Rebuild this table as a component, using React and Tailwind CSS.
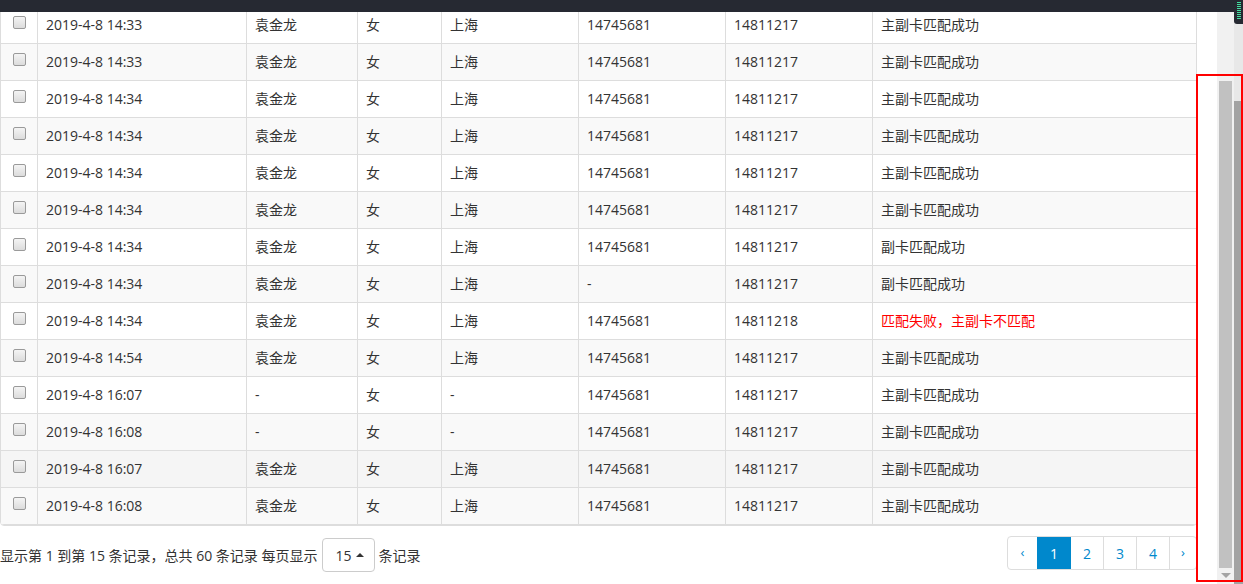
import React from "react";

const OK = "主副卡匹配成功";
const rows = [
  ["2019-4-8 14:33", "袁金龙", "女", "上海", "14745681", "14811217", OK],
  ["2019-4-8 14:33", "袁金龙", "女", "上海", "14745681", "14811217", OK],
  ["2019-4-8 14:34", "袁金龙", "女", "上海", "14745681", "14811217", OK],
  ["2019-4-8 14:34", "袁金龙", "女", "上海", "14745681", "14811217", OK],
  ["2019-4-8 14:34", "袁金龙", "女", "上海", "14745681", "14811217", OK],
  ["2019-4-8 14:34", "袁金龙", "女", "上海", "14745681", "14811217", OK],
  ["2019-4-8 14:34", "袁金龙", "女", "上海", "14745681", "14811217", "副卡匹配成功"],
  ["2019-4-8 14:34", "袁金龙", "女", "上海", "-", "14811217", "副卡匹配成功"],
  ["2019-4-8 14:34", "袁金龙", "女", "上海", "14745681", "14811218", "匹配失败，主副卡不匹配", true],
  ["2019-4-8 14:54", "袁金龙", "女", "上海", "14745681", "14811217", OK],
  ["2019-4-8 16:07", "-", "女", "-", "14745681", "14811217", OK],
  ["2019-4-8 16:08", "-", "女", "-", "14745681", "14811217", OK],
  ["2019-4-8 16:07", "袁金龙", "女", "上海", "14745681", "14811217", OK],
  ["2019-4-8 16:08", "袁金龙", "女", "上海", "14745681", "14811217", OK],
];

function Checkbox() {
  return (
    <div className="w-[13px] h-[13px] rounded-[2px] border border-[#9a9a9a] bg-gradient-to-b from-[#f4f4f4] to-[#dcdcdc]" />
  );
}

function Row({ r, i }) {
  const bg = i === 12 ? "bg-[#f5f5f5]" : i % 2 === 1 ? "bg-[#f9f9f9]" : "bg-white";
  const cell = "border-l border-[#dddddd] pl-[8px] pb-[2px] flex items-center";
  return (
    <div className={`flex h-[37px] border-b border-[#dddddd] ${bg}`}>
      <div className="w-[36px] flex justify-center pt-[9px]">
        <Checkbox />
      </div>
      <div className={`w-[209px] ${cell}`}>{r[0]}</div>
      <div className={`w-[111px] ${cell}`}>{r[1]}</div>
      <div className={`w-[84px] ${cell}`}>{r[2]}</div>
      <div className={`w-[137px] ${cell}`}>{r[3]}</div>
      <div className={`w-[147px] ${cell}`}>{r[4]}</div>
      <div className={`w-[147px] ${cell}`}>{r[5]}</div>
      <div className={`flex-1 ${cell} ${r[7] ? "text-[#ff0000]" : ""}`}>{r[6]}</div>
    </div>
  );
}

export default function App() {
  return (
    <div
      className="relative w-[1243px] h-[584px] overflow-hidden flex flex-col bg-white text-[14px] text-[#333333]"
      style={{ fontFamily: '"Open Sans", "Noto Sans CJK SC", sans-serif' }}
    >
      <div className="h-[12px] bg-[#262932] shrink-0" />
      <div className="flex flex-1 min-h-0 overflow-hidden">
        <div className="w-[1197px] flex flex-col">
          <div className="-mt-[6px] border border-[#dddddd] rounded-b-[4px] overflow-hidden">
            {rows.map((r, i) => (
              <Row key={i} r={r} i={i} />
            ))}
          </div>
          <div className="flex justify-between items-start">
            <div className="flex items-center mt-[12px] whitespace-pre">
              <span>显示第 1 到第 15 条记录，总共 60 条记录 每页显示</span>
              <div className="ml-[5px] h-[34px] w-[53px] border border-[#cccccc] rounded-[4px] flex items-center pl-[12px]">
                <span>15</span>
                <span className="ml-[4px] w-0 h-0 border-l-[4px] border-r-[4px] border-b-[4px] border-l-transparent border-r-transparent border-b-[#333333]" />
              </div>
              <span className="ml-[3px]">条记录</span>
            </div>
            <div className="mt-[10px] flex h-[34px] border border-[#dddddd] rounded-[4px] overflow-hidden text-[#0088cc]">
              <div className="w-[29px] flex items-center justify-center text-[13px]">‹</div>
              <div className="w-[34px] flex items-center justify-center bg-[#0088cc] text-white">1</div>
              <div className="w-[32px] flex items-center justify-center">2</div>
              <div className="w-[33px] flex items-center justify-center border-l border-[#dddddd]">3</div>
              <div className="w-[33px] flex items-center justify-center border-l border-[#dddddd]">4</div>
              <div className="flex-1 w-[27px] flex items-center justify-center border-l border-[#dddddd] text-[13px]">›</div>
            </div>
          </div>
        </div>
        <div className="w-[20px] bg-white" />
        <div className="w-[17px] bg-[#f1f1f1] flex flex-col">
          <div className="ml-[2px] mt-[69px] w-[13px] h-[487px] bg-[#c1c1c1]" />
          <div className="mt-[5px] ml-[4px] w-0 h-0 border-l-[5px] border-r-[5px] border-t-[5px] border-l-transparent border-r-transparent border-t-[#a3a3a3]" />
        </div>
        <div className="w-[9px] flex flex-col">
          <div className="h-[89px] bg-[#e8e8e8]" />
          <div className="flex-1 bg-[#a3a3a3]" />
        </div>
      </div>
      <div className="absolute top-0 left-[1234px] w-[9px] h-[24px] bg-[#262932] rounded-bl-[3px] flex flex-col items-center pt-[2px] gap-[1px]">
        {Array.from({ length: 9 }).map((_, k) => (
          <div key={k} className="w-[4px] h-[1px] bg-[#43e0a0]" />
        ))}
      </div>
      <div className="absolute left-[1196px] top-[74px] w-[47px] h-[508px] border-2 border-[#ff0000]" />
    </div>
  );
}
